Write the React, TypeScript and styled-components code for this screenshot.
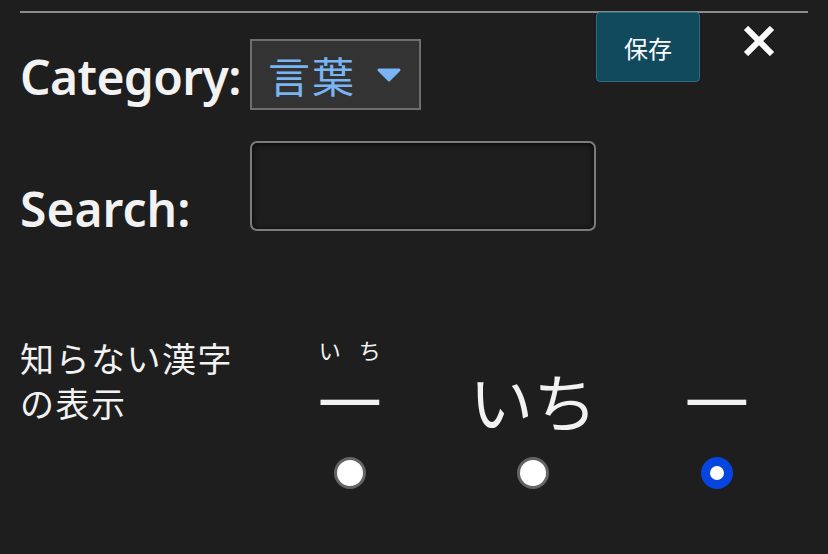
import React, { useState } from "react";
import styled, { createGlobalStyle } from "styled-components";

const Global = createGlobalStyle`
  html, body { margin: 0; padding: 0; background: #1e1e1e; }
  body { font-family: "Noto Sans", "Noto Sans CJK JP", sans-serif; color: #f2f2f2; }
  * { box-sizing: border-box; }
`;

const Page = styled.div`
  width: 828px;
  height: 554px;
  padding: 0 20px;
  background: #1e1e1e;
  overflow: hidden;
`;

const Rule = styled.div`
  margin-top: 11px;
  height: 2px;
  background: #8c8c8c;
`;

const TopArea = styled.div`
  display: flex;
  justify-content: space-between;
  align-items: flex-start;
`;

const Form = styled.div`
  display: grid;
  grid-template-columns: 230px auto;
  row-gap: 31px;
  padding-top: 26px;
`;

const FieldLabel = styled.label<{ $end?: boolean }>`
  font-family: "Noto Sans", sans-serif;
  font-weight: 600;
  font-size: 48px;
  color: #f2f2f2;
  align-self: ${(p) => (p.$end ? "end" : "center")};
  margin-bottom: ${(p) => (p.$end ? "-10px" : "0")};
  margin-top: ${(p) => (p.$end ? "0" : "3px")};
  letter-spacing: ${(p) => (p.$end ? "0" : "-0.6px")};
  white-space: nowrap;
`;

const SelectBox = styled.div`
  width: 171px;
  height: 71px;
  border: 2px solid #6e6e6e;
  background: #333333;
  display: flex;
  align-items: center;
  padding-left: 16px;
  gap: 20px;
`;

const SelectText = styled.span`
  font-family: "Noto Sans CJK JP", sans-serif;
  font-size: 42px;
  color: #7ab4f2;
  letter-spacing: 2px;
`;

const SearchInput = styled.input`
  width: 346px;
  height: 90px;
  border: 2px solid #7c7c7c;
  border-radius: 7px;
  background: #1e1e1e;
  box-shadow: inset 0 1px 6px rgba(0, 0, 0, 0.85);
  outline: none;
  color: #f2f2f2;
  font-size: 32px;
`;

const Toolbar = styled.div`
  display: flex;
  align-items: flex-start;
  margin-top: -1px;
`;

const SaveButton = styled.button`
  width: 104px;
  height: 70px;
  background: #114a5c;
  border: 1.5px solid #2c6b80;
  border-radius: 4px;
  color: #ffffff;
  font-family: "Noto Sans CJK JP", sans-serif;
  font-size: 24px;
  cursor: pointer;
  padding: 0;
`;

const CloseButton = styled.button`
  width: 64px;
  height: 60px;
  margin-left: 27px;
  margin-right: 17px;
  margin-top: -1px;
  background: none;
  border: none;
  display: flex;
  align-items: center;
  justify-content: center;
  cursor: pointer;
  padding: 0;
`;

const Section = styled.div`
  display: flex;
  margin-top: 104px;
`;

const SectionLabel = styled.div`
  width: 238px;
  flex-shrink: 0;
  font-family: "Noto Sans CJK JP", sans-serif;
  font-size: 34px;
  letter-spacing: 1.5px;
  line-height: 45px;
  color: #f2f2f2;
`;

const Options = styled.div`
  display: grid;
  grid-template-columns: repeat(3, 183.5px);
`;

const Option = styled.label`
  display: flex;
  flex-direction: column;
  align-items: center;
  cursor: pointer;
`;

const WordBox = styled.div`
  height: 100px;
  display: flex;
  flex-direction: column;
  align-items: center;
  justify-content: flex-end;
`;

const Reading = styled.span`
  font-family: "Noto Sans CJK JP", sans-serif;
  font-size: 22px;
  line-height: 24px;
  letter-spacing: 18px;
  padding-left: 18px;
  margin-bottom: 2px;
  color: #f2f2f2;
`;

const Word = styled.span`
  font-family: "Noto Sans CJK JP", sans-serif;
  font-size: 64px;
  line-height: 72px;
  color: #f2f2f2;
`;

const Radio = styled.input`
  appearance: none;
  margin: 22px 0 0 0;
  width: 32px;
  height: 32px;
  border-radius: 50%;
  background: #ffffff;
  border: 3px solid #646464;
  cursor: pointer;
  &:checked {
    border: 9.5px solid #0645e0;
  }
`;

const Caret = () => (
  <svg width="26" height="14" viewBox="0 0 26 14">
    <path d="M3 2 L23 2 L13 12 Z" fill="#7ab4f2" stroke="#7ab4f2" strokeWidth="3" strokeLinejoin="round" />
  </svg>
);

const CloseIcon = () => (
  <svg width="34" height="30" viewBox="0 0 34 30">
    <path d="M4 2 L30 28 M30 2 L4 28" stroke="#ffffff" strokeWidth="6" />
  </svg>
);

export default function App() {
  const [mode, setMode] = useState("kanji");
  return (
    <Page>
      <Global />
      <Rule />
      <TopArea>
        <Form>
          <FieldLabel>Category:</FieldLabel>
          <SelectBox>
            <SelectText>言葉</SelectText>
            <Caret />
          </SelectBox>
          <FieldLabel $end>Search:</FieldLabel>
          <SearchInput type="text" />
        </Form>
        <Toolbar>
          <SaveButton>保存</SaveButton>
          <CloseButton aria-label="close">
            <CloseIcon />
          </CloseButton>
        </Toolbar>
      </TopArea>
      <Section>
        <SectionLabel>知らない漢字の表示</SectionLabel>
        <Options>
          <Option>
            <WordBox>
              <Reading>いち</Reading>
              <Word>一</Word>
            </WordBox>
            <Radio type="radio" name="disp" checked={mode === "ruby"} onChange={() => setMode("ruby")} />
          </Option>
          <Option>
            <WordBox>
              <Word>いち</Word>
            </WordBox>
            <Radio type="radio" name="disp" checked={mode === "kana"} onChange={() => setMode("kana")} />
          </Option>
          <Option>
            <WordBox>
              <Word>一</Word>
            </WordBox>
            <Radio type="radio" name="disp" checked={mode === "kanji"} onChange={() => setMode("kanji")} />
          </Option>
        </Options>
      </Section>
    </Page>
  );
}
